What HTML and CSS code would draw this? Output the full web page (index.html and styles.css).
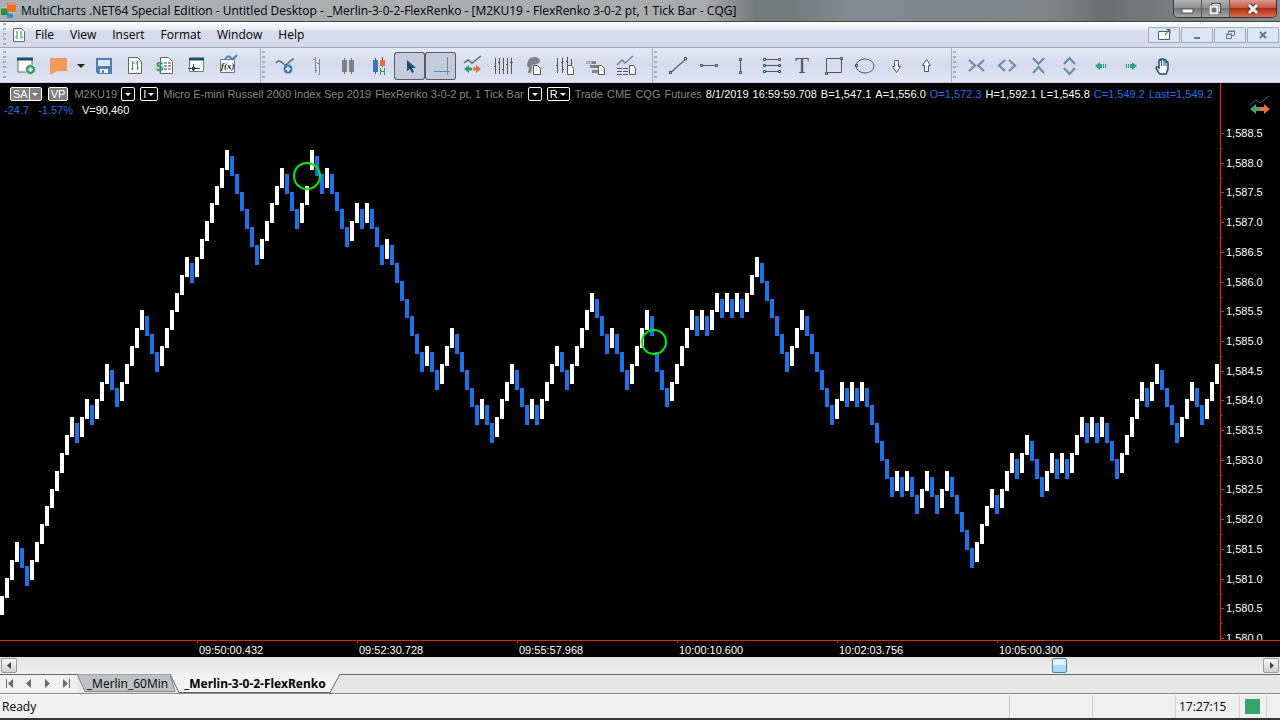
FILE: index.html
```html
<!DOCTYPE html>
<html lang="en">
<head>
    <meta charset="UTF-8">
    <meta name="viewport" content="width=device-width, initial-scale=1.0">
    <title>MultiCharts .NET64 Special Edition</title>
    <link rel="stylesheet" href="styles.css">
</head>
<body>
    <header class="titlebar">
        <svg class="app-icon" width="17" height="17" viewBox="0 0 17 17">
            <rect x="0" y="6" width="7" height="7" fill="#2f8a3c"/>
            <rect x="6" y="1" width="9" height="9" fill="#e8702a"/>
            <rect x="6" y="11" width="6" height="5" fill="#2d8fd0"/>
            <path d="M0 6h6M7 2h8M8 11h5" stroke="#fff" stroke-opacity=".5"/>
        </svg>
        <h1 class="title">MultiCharts .NET64 Special Edition - Untitled Desktop - _Merlin-3-0-2-FlexRenko - [M2KU19 - FlexRenko 3-0-2 pt, 1 Tick Bar - CQG]</h1>
        <div class="window-buttons">
            <button class="win-btn" aria-label="Minimize"><svg width="27" height="16" viewBox="0 0 27 16"><rect x="8" y="8" width="11" height="4" fill="#fff" stroke="#555"/></svg></button>
            <button class="win-btn" aria-label="Restore"><svg width="27" height="16" viewBox="0 0 27 16"><path d="M10.500 3.500h7v7h-7z" fill="none" stroke="#444" stroke-width="3"/><path d="M10.500 3.500h7v7h-7z" fill="none" stroke="#fff"/><rect x="8.500" y="5.500" width="7" height="7" fill="#666" stroke="#444" stroke-width="3"/><rect x="8.500" y="5.500" width="7" height="7" fill="#777" stroke="#fff" stroke-width="2"/></svg></button>
            <button class="win-btn win-close" aria-label="Close"><svg width="46" height="16" viewBox="0 0 46 16"><path d="M19 4l8 8M27 4l-8 8" stroke="#5a3030" stroke-width="5"/><path d="M19 4l8 8M27 4l-8 8" stroke="#fff" stroke-width="3"/></svg></button>
        </div>
    </header>

    <nav class="menubar">
        <span class="grip"></span>
        <svg class="doc-icon" width="14" height="16" viewBox="0 0 14 16">
            <path d="M1.500 1.500h8l3 3v10h-11z" fill="#fff" stroke="#666"/>
            <path d="M5 4v8M3 10h2M5 6h1M9 4v8M8 6h1M9 10h2" stroke="#2d9c60" fill="none"/>
        </svg>
        <button class="menu-item">File</button>
        <button class="menu-item">View</button>
        <button class="menu-item">Insert</button>
        <button class="menu-item">Format</button>
        <button class="menu-item">Window</button>
        <button class="menu-item">Help</button>
        <div class="mdi-buttons">
            <button class="mdi-btn" aria-label="Detach"><svg width="30" height="14" viewBox="0 0 30 14"><path d="M9.500 3.500h11v8h-11z" fill="#fff" stroke="#555"/><path d="M16 7l4-5M17 1.500h4v4" fill="none" stroke="#555"/></svg></button>
            <button class="mdi-btn" aria-label="Minimize chart"><svg width="30" height="14" viewBox="0 0 30 14"><path d="M12 10h6" stroke="#5f7896" stroke-width="2"/></svg></button>
            <button class="mdi-btn" aria-label="Restore chart"><svg width="30" height="14" viewBox="0 0 30 14"><path d="M13.500 5V3.500h6v4H17M11.500 6.500h5v4h-5zM13 3h7M11 6h6" fill="none" stroke="#5f7896"/></svg></button>
            <button class="mdi-btn" aria-label="Close chart"><svg width="30" height="14" viewBox="0 0 30 14"><path d="M12 4l6 6M18 4l-6 6" stroke="#5f7896" stroke-width="2"/></svg></button>
        </div>
    </nav>

    <div class="toolbar">
        <div class="tool-group first">
            <span class="grip"></span>
            <button class="tool" aria-label="New window"><svg viewBox="0 0 31 28"><path d="M8 7h14v13H8z" fill="#fff" stroke="#666"/><path d="M7 7h16" stroke="#1d4e72" stroke-width="3"/><circle cx="20.500" cy="17.500" r="5" fill="#2d9c60" stroke="#dfe3f3"/><path d="M18 17.500h5M20.500 15v5" stroke="#fff" stroke-width="1.500"/></svg></button>
            <button class="tool wide" aria-label="Open workspace"><svg viewBox="0 0 47 28"><path d="M9 6h17v13H16l-5 3H9z" fill="#f29a57"/><path d="M36 12h8l-4 4z" fill="#222"/></svg></button>
            <button class="tool" aria-label="Save"><svg viewBox="0 0 31 28"><path d="M8 6h16v16H10l-2-2z" fill="#4b7fb5"/><path d="M10 8h12v6H10z" fill="#dfe6f2"/><path d="M12 17h8v4h-8z" fill="#fff"/><path d="M14 18h2v3h-2z" fill="#4b7fb5"/></svg></button>
            <button class="tool" aria-label="New chart"><svg viewBox="0 0 31 28"><path d="M9.500 5.500h9l4 4v12h-13z" fill="#fff" stroke="#666"/><path d="M13.500 9v9M12 17h2M14 11h2M18.500 9v9M17 11h2M18 16h2" fill="none" stroke="#2d9c60"/></svg></button>
            <button class="tool" aria-label="Trade manager"><svg viewBox="0 0 31 28"><path d="M10.500 5.500h8l4 4v12h-12z" fill="#fff" stroke="#666"/><path d="M14 11h3M18 11h3M14 14h3M18 14h3M14 17h3M18 17h3" stroke="#444"/><text x="6" y="19" class="icon-dollar">$</text></svg></button>
            <button class="tool" aria-label="Scanner"><svg viewBox="0 0 31 28"><path d="M8.500 7.500h14v12h-14z" fill="#fff" stroke="#777"/><path d="M8 7h15" stroke="#1d4e72" stroke-width="3"/><path d="M7 16.500h12M12.500 12v7" stroke="#1d4e72"/><circle cx="12.500" cy="16.500" r="2" fill="#1d4e72"/></svg></button>
            <button class="tool" aria-label="Formula"><svg viewBox="0 0 31 28"><path d="M8.500 7.500h14v13h-14z" fill="#fff" stroke="#777"/><text x="9" y="17" class="icon-fx">f(x)</text><path d="M13 8c2-5 4-4 6-2s3 0 6-3" fill="none" stroke="#3b87c8" stroke-width="2"/></svg></button>
        </div>
        <div class="tool-group">
            <span class="grip"></span>
            <button class="tool" aria-label="Insert study"><svg viewBox="0 0 31 28"><path d="M6 11c4-5 7 1 9 2s5-6 9-6" fill="none" stroke="#666" stroke-width="1.500"/><circle cx="18" cy="17" r="4.500" fill="#3d78ad"/><path d="M15.500 17h5M18 14.500v5" stroke="#fff" stroke-width="1.500"/></svg></button>
            <button class="tool" aria-label="OHLC bars"><svg viewBox="0 0 31 28"><path d="M14.500 5v16M12 7.500h2M14 18.500h2M18.500 7v16M16 11.500h2" stroke="#85878d"/></svg></button>
            <button class="tool" aria-label="Candlesticks"><svg viewBox="0 0 31 28"><path d="M10 8h5v12h-5zM17 8h5v12h-5z" fill="#808285"/><path d="M12.500 6v16M19.500 6v16" stroke="#777"/></svg></button>
            <button class="tool" aria-label="Heikin-Ashi"><svg viewBox="0 0 31 28"><path d="M12.500 6v16M19.500 5v10" stroke="#555"/><path d="M10 8h5v12h-5z" fill="#3d78ad"/><path d="M17 8h5v6h-5z" fill="#e8703a"/><path d="M17.500 16v7M21.500 16v7M18 19.500h4" stroke="#2d9c60"/></svg></button>
            <button class="tool active" aria-label="Pointer"><svg viewBox="0 0 31 28"><path d="M13 8v11l3-2 2 4 2-1-2-4h4z" fill="#1d4e72"/></svg></button>
            <button class="tool active" aria-label="Crosshair"><svg viewBox="0 0 31 28"><path d="M22.500 5v18M9 19.500h16" stroke="#4f93cd"/></svg></button>
            <button class="tool" aria-label="Chart trading"><svg viewBox="0 0 31 28"><path d="M8 11l4-3 4 3 9-7" fill="none" stroke="#666" stroke-width="1.500"/><path d="M8 17l5-4v2.500h3v3h-3V21z" fill="#2d9c60"/><path d="M25 17l-5-4v2.500h-3v3h3V21z" fill="#e8703a"/></svg></button>
            <button class="tool" aria-label="Bars"><svg viewBox="0 0 31 28"><path d="M8.500 6v16M12.500 6v16M16.500 6v16M20.500 6v16M24.500 6v16M7 14.500h2M11 10.500h2M15 17.500h2M19 12.500h2M23 10.500h3" stroke="#555"/></svg></button>
            <button class="tool" aria-label="Strategy"><svg viewBox="0 0 31 28"><path d="M9 14c0-6 3-9 7-9 4 0 6 2 6 5l-3 2-5 1v3l-1 5h-3l1-5z" fill="#808285"/><path d="M15.500 13.500h4l3 3v6h-7z" fill="#fff" stroke="#555"/></svg></button>
            <button class="tool" aria-label="Format instruments"><svg viewBox="0 0 31 28"><path d="M8.500 6v15M13.500 6v15M18.500 5v9M22.500 7v6M7 13.500h2M12 10.500h2M13 17.500h2M17 9.500h2" stroke="#555"/><path d="M18.500 13.500h4l2 3v6h-6z" fill="#fff" stroke="#555"/></svg></button>
            <button class="tool" aria-label="Format orders"><svg viewBox="0 0 31 28"><path d="M6 9h6v3H6zM12 13h5v3h-5z" fill="#b0b0b0"/><path d="M12 9h4v3h-4zM10 13h8v3h-8zM12 18h6v3h-6z" fill="#808285"/><path d="M18.500 13.500h3l3 3v6h-6z" fill="#fff" stroke="#555"/></svg></button>
            <button class="tool" aria-label="Format studies"><svg viewBox="0 0 31 28"><path d="M6 13l5-5 3 3 8-7" fill="none" stroke="#6f87a5" stroke-width="1.500"/><path d="M6 16.500h5M12 16.500h5M6 19.500h5M12 19.500h5M6 22.500h5M12 22.500h5" stroke="#555"/><path d="M18.500 13.500h4l2 3v6h-6z" fill="#fff" stroke="#555"/></svg></button>
        </div>
        <div class="tool-group">
            <span class="grip"></span>
            <button class="tool" aria-label="Trend line"><svg viewBox="0 0 31 28"><path d="M8 21L24 7" stroke="#666" stroke-width="1.500"/><path d="M7.500 19.500h2v2h-2zM22.500 5.500h2v2h-2z" class="handle"/></svg></button>
            <button class="tool" aria-label="Horizontal line"><svg viewBox="0 0 31 28"><path d="M9 13.500h14" stroke="#555"/><path d="M7.500 12.500h2v2h-2zM22.500 12.500h2v2h-2z" class="handle"/></svg></button>
            <button class="tool" aria-label="Vertical line"><svg viewBox="0 0 31 28"><path d="M16.500 7v13" stroke="#555"/><path d="M15.500 6.500h2v2h-2zM15.500 19.500h2v2h-2z" class="handle"/></svg></button>
            <button class="tool" aria-label="Fibonacci"><svg viewBox="0 0 31 28"><path d="M9 7.500h15M9 13.500h15M9 19.500h15" stroke="#555"/><path d="M8.500 6.500h2v2h-2zM8.500 12.500h2v2h-2zM8.500 18.500h2v2h-2zM23.500 6.500h2v2h-2zM23.500 12.500h2v2h-2zM23.500 18.500h2v2h-2z" class="handle"/></svg></button>
            <button class="tool" aria-label="Text"><svg viewBox="0 0 31 28"><text x="9" y="21" class="icon-text">T</text></svg></button>
            <button class="tool" aria-label="Rectangle"><svg viewBox="0 0 31 28"><path d="M9.500 6.500h15v14h-15z" fill="none" stroke="#555"/><path d="M8.500 20.500h2v2h-2zM23.500 5.500h2v2h-2z" class="handle"/></svg></button>
            <button class="tool" aria-label="Ellipse"><svg viewBox="0 0 31 28"><ellipse cx="17" cy="14" rx="9" ry="7" fill="none" stroke="#555"/><path d="M7.500 12.500h2v2h-2z" class="handle"/></svg></button>
            <button class="tool" aria-label="Arrow down"><svg viewBox="0 0 31 28"><path d="M15.500 8.500h4v6h2l-4 6-4-6h2z" fill="#fff" stroke="#555"/></svg></button>
            <button class="tool" aria-label="Arrow up"><svg viewBox="0 0 31 28"><path d="M14.500 19.500h4v-6h2l-4-6-4 6h2z" fill="#fff" stroke="#555"/></svg></button>
        </div>
        <div class="tool-group last">
            <span class="grip"></span>
            <button class="tool" aria-label="Decrease spacing"><svg viewBox="0 0 31 28"><path d="M8 8l6 5.500L8 19M23 8l-6 5.500 6 5.500" class="chev"/></svg></button>
            <button class="tool" aria-label="Increase spacing"><svg viewBox="0 0 31 28"><path d="M13 8l-6 5.500 6 5.500M17 8l6 5.500-6 5.500" class="chev"/></svg></button>
            <button class="tool" aria-label="Compress"><svg viewBox="0 0 31 28"><path d="M10 6l5.500 6L21 6M10 21l5.500-6 5.500 6" class="chev"/></svg></button>
            <button class="tool" aria-label="Expand"><svg viewBox="0 0 31 28"><path d="M10 12l5.500-6 5.500 6M10 16l5.500 6 5.500-6" class="chev"/></svg></button>
            <button class="tool" aria-label="Scroll left"><svg viewBox="0 0 31 28"><path d="M10 14l5-4v2h2v4h-2v2zM18 12h1v4h-1zM20 12h1v4h-1z" fill="#22a678"/></svg></button>
            <button class="tool" aria-label="Scroll right"><svg viewBox="0 0 31 28"><path d="M21 14l-5-4v2h-2v4h2v2zM12 12h1v4h-1zM10 12h1v4h-1z" fill="#22a678"/></svg></button>
            <button class="tool" aria-label="Hand"><svg viewBox="0 0 31 28"><path d="M12 21l-3-5c0-2 2-1 3 0V9c0-2 2-2 2 0 0-3 3-3 3 0 0-2 2-2 2 0v2c0-2 2-2 2 0v6l-2 5h-6z" fill="#fff" stroke="#1d4e72" stroke-width="1.500"/><path d="M14.500 9v5M17 9v5M19 10v4" stroke="#1d4e72"/></svg></button>
        </div>
    </div>

    <main class="chart">
        <div class="status-line">
            <div class="status-row">
                <button class="tag filled">SA<i class="split"></i><i class="caret"></i></button>
                <button class="tag filled">VP</button>
                <span>M2KU19</span>
                <button class="tag" aria-label="Symbol"><i class="caret"></i></button>
                <button class="tag">I<i class="caret"></i></button>
                <span>Micro E-mini Russell 2000 Index Sep 2019</span>
                <span>FlexRenko 3-0-2 pt, 1 Tick Bar</span>
                <button class="tag" aria-label="Resolution"><i class="caret"></i></button>
                <button class="tag">R<i class="caret"></i></button>
                <span>Trade</span>
                <span>CME</span>
                <span>CQG</span>
                <span>Futures</span>
                <span class="white">8/1/2019</span>
                <span class="white">16:59:59.708</span>
                <span class="white">B=1,547.1</span>
                <span class="white">A=1,556.0</span>
                <span class="blue">O=1,572.3</span>
                <span class="white">H=1,592.1</span>
                <span class="white">L=1,545.8</span>
                <span class="blue">C=1,549.2</span>
                <span class="blue">Last=1,549.2</span>
            </div>
            <div class="status-row second">
                <span class="blue">-24.7</span>
                <span class="blue">-1.57%</span>
                <span class="white">V=90,460</span>
            </div>
        </div>
        <svg class="plot" id="plot"></svg>
        <svg class="trade-icon" width="22" height="20" viewBox="0 0 22 20">
            <path d="M1 10l6-5 4 3 9-7" fill="none" stroke="#4d5f74"/>
            <path d="M1 14l6-5v3h4v4H7v3z" fill="#3fa469"/>
            <path d="M21 14l-6-5v3h-4v4h4v3z" fill="#e8703a"/>
        </svg>
    </main>

    <div class="scrollbar">
        <button class="scroll-btn" aria-label="Scroll left"><svg width="14" height="13" viewBox="0 0 14 13"><path d="M9 3v7L5 6.500z" fill="#444"/></svg></button>
        <div class="track"><div class="thumb"></div></div>
        <button class="scroll-btn" aria-label="Scroll right"><svg width="14" height="13" viewBox="0 0 14 13"><path d="M6 3v7l4-3.500z" fill="#444"/></svg></button>
    </div>

    <div class="tabs">
        <div class="tab-nav">
            <button aria-label="First"><svg width="19" height="18" viewBox="0 0 19 18"><path d="M6.500 4v9" stroke="#6c6c6c"/><path d="M13 4v9L8 8.500z" fill="#6c6c6c"/></svg></button>
            <button aria-label="Previous"><svg width="19" height="18" viewBox="0 0 19 18"><path d="M12 4v9L7 8.500z" fill="#6c6c6c"/></svg></button>
            <button aria-label="Next"><svg width="19" height="18" viewBox="0 0 19 18"><path d="M7 4v9l5-4.500z" fill="#6c6c6c"/></svg></button>
            <button aria-label="Last"><svg width="19" height="18" viewBox="0 0 19 18"><path d="M12.500 4v9" stroke="#6c6c6c"/><path d="M6 4v9l5-4.500z" fill="#6c6c6c"/></svg></button>
        </div>
        <button class="tab">
            <svg class="tab-shape" viewBox="0 0 101 19" preserveAspectRatio="none"><path d="M0 0L8 17.500H98L93 0z" fill="#bcc2c3" stroke="#888"/></svg>
            <span>_Merlin_60Min</span>
        </button>
        <button class="tab current">
            <svg class="tab-shape" viewBox="0 0 170 19" preserveAspectRatio="none"><path d="M0 0L9 18.500H160L170 0z" fill="#f3f3f3"/><path d="M0 0L9 18.500H160L170 0" fill="none" stroke="#666"/></svg>
            <span>_Merlin-3-0-2-FlexRenko</span>
        </button>
    </div>

    <footer class="statusbar">
        <span class="ready">Ready</span>
        <span class="cell"></span>
        <span class="cell"></span>
        <span class="cell clock">17:27:15</span>
        <span class="cell light"><i></i></span>
        <span class="cell end"></span>
    </footer>
    <script src="chart.js"></script>
</body>
</html>
```
FILE: chart.js
```js
const plot = document.querySelector("#plot")

const axisWidth = 60
const axisHeight = 17
const barStep = 5
const tickPx = 5.94   // one tick = 0.1 pt
const highY = 67      // y of the 1,588.2 high

// Runs of up and down bars. "+" is a gap of one brick before the bar
const runs = "4U 2D 9U 1D 2U 1D 3U 2D 5U 3D 6U 1D 7U 6D 5U 3D 2U +1U 2D 1U 4D 2U 1D 1U 3D 1U 7D 1U 2D 3U 5D 1U 2D 4U 3D 1U 1D 4U 2D 5U 3D 1U 3D 4U 1D +3D 5U 1D 1U 1D 2U 1D 1U 1D 1U 1D 3U 6D 3U 6D 2U 1D 1U 1D 1U 6D 1U 1D 1U 2D 2U 2D 2U 5D 4U 1D 3U 1D 2U 3D 2U 1D 1U 1D 3U 1D 1U 1D 1U 3D 5U 1D 2U 4D 3U 2D 3U"
const times = ["09:50:00.432", "09:52:30.728", "09:55:57.968", "10:00:10.600", "10:02:03.756", "10:05:00.300"]
const circles = [[307, 93, 13], [654, 259, 12]]

function add(name, attrs, text){
    const el = document.createElementNS("http://www.w3.org/2000/svg", name)
    for (const key in attrs){
        el.setAttribute(key, attrs[key])
    }
    if (text) el.textContent = text
    plot.appendChild(el)
}

function drawBars(){
    let ticks = 78
    let x = 0
    let last = "U"
    runs.split(" ").forEach(run => {
        const dir = run.slice(-1)
        const count = parseInt(run.replace("+", ""))
        const sign = dir == "U" ? -1 : 1
        if (run[0] == "+") ticks += 3 * sign
        for (let i = 0; i < count; i++){
            ticks += (dir == last ? 3 : 1) * sign
            last = dir
            const y = Math.round(highY + ticks * tickPx)
            const bottom = Math.round(highY + (ticks + 3) * tickPx) + 2
            add("rect", {x: x, y: y, width: 4, height: bottom - y, class: dir == "U" ? "bar-up" : "bar-down"})
            x += barStep
        }
    })
}

function drawAxes(w, h){
    const right = w - axisWidth
    const bottom = h - axisHeight
    add("rect", {x: right, y: 0, width: axisWidth, height: h, class: "axis-bg"})
    for (let i = 0; i <= 17; i++){
        const y = Math.round(50 + i * tickPx * 5)
        const price = (1588.5 - i * 0.5).toFixed(1)
        add("rect", {x: right, y: y, width: 4, height: 1, class: "axis"})
        add("rect", {x: right, y: y + 15, width: 2, height: 1, class: "axis"})
        add("text", {x: right + 6, y: y + 4, class: "label"}, price.replace("1", "1,"))
    }
    add("rect", {x: 0, y: bottom, width: w, height: axisHeight, class: "axis-bg"})
    add("rect", {x: right, y: 0, width: 1, height: bottom, class: "axis"})
    add("rect", {x: 0, y: bottom, width: w, height: 1, class: "axis"})
    times.forEach((time, i) => {
        const x = 197 + i * 160
        add("rect", {x: x, y: bottom, width: 1, height: 3, class: "axis"})
        add("text", {x: x + 2, y: bottom + 14, class: "label"}, time)
    })
}

function draw(){
    plot.innerHTML = ""
    drawBars()
    circles.forEach(c => add("circle", {cx: c[0], cy: c[1], r: c[2], class: "mark"}))
    drawAxes(plot.clientWidth, plot.clientHeight)
}

draw()
window.addEventListener("resize", draw)
```
FILE: styles.css
```css
*{
    box-sizing: border-box;
}
body{
    margin: 0;
    height: 100vh;
    display: flex;
    flex-direction: column;
    overflow: hidden;
    background-color: #f0f0f0;
    color: #000;
    font-family: "Open Sans", "Noto Sans", sans-serif;
    font-size: 12px;
    border-bottom: 2px solid #333;
}
button{
    margin: 0;
    padding: 0;
    border: none;
    background: none;
    color: inherit;
    font: inherit;
}
svg{
    display: block;
}

/* title bar */
.titlebar{
    flex: none;
    display: flex;
    height: 22px;
    padding: 0 3px 0 1px;
    background: linear-gradient(90deg, #a9b0b4 0%, #a9acae 55%, #74797c 59%, #74797c 62%, #828a90 66%, #808487 82%, #6d7072 86%, #8b8e90 100%);
    border-bottom: 1px solid #444;
}
.app-icon{
    margin: 2px 3px 0 0;
}
.title{
    flex: 1;
    margin: 0;
    font-size: 12px;
    font-weight: normal;
    line-height: 21px;
    white-space: nowrap;
    overflow: hidden;
}
.window-buttons{
    display: flex;
    height: 18px;
    border: 1px solid #333;
    border-top: none;
    border-radius: 0 0 5px 5px;
    overflow: hidden;
}
.win-btn{
    background: linear-gradient(#b4b4b4, #8c8c8c 50%, #767676 50%, #a5a5a5);
    border-right: 1px solid #555;
}
.win-close{
    background: linear-gradient(#d89a90, #c4503c 50%, #b02a10 50%, #d97050);
    border-right: none;
}

/* menu */
.menubar{
    flex: none;
    display: flex;
    align-items: center;
    height: 26px;
    background: linear-gradient(#fff, #e3e7f4 35%, #d6daec 38%);
    border-bottom: 1px solid #a5a8b0;
}
.grip{
    flex: none;
    width: 3px;
    height: 24px;
    margin: 0 6px 0 3px;
    background: repeating-linear-gradient(#a9adba 0 2px, transparent 2px 5px);
}
.doc-icon{
    margin-right: 1px;
}
.menu-item{
    padding: 0 8px;
    line-height: 20px;
}
.mdi-buttons{
    display: flex;
    gap: 1px;
    margin-left: auto;
    padding-right: 1px;
}
.mdi-btn{
    border: 1px solid #9fb0c2;
    background-color: #dbe7f3;
}

/* toolbar */
.toolbar{
    flex: none;
    display: flex;
    height: 35px;
    background: linear-gradient(#e4e7f5, #d5daed 50%, #e0e4f5);
    border-bottom: 1px solid #c5c9dc;
}
.tool-group{
    display: flex;
    align-items: center;
    padding: 2px 10px 0 0;
    border-right: 1px solid #a9adba;
}
.tool-group .grip{
    height: 30px;
    margin: 0 5px 0 1px;
}
.tool-group.first{
    padding-right: 17px;
}
.tool-group.first .grip{
    margin: 0 4px 0 3px;
}
.tool-group.last{
    border-right: none;
}
.tool{
    width: 31px;
    height: 28px;
}
.tool svg{
    width: 100%;
    height: 28px;
}
.tool.wide{
    width: 47px;
}
.tool.active{
    background-color: #c6cbdc;
    border-radius: 3px;
    box-shadow: inset 0 0 0 1px #555b68;
}
.handle{
    fill: #fff;
    stroke: #1d4e72;
}
.chev{
    fill: none;
    stroke: #5f88b3;
    stroke-width: 2;
}
.icon-dollar{
    fill: #2d9c60;
    font: bold 13px "Liberation Sans", Arial, sans-serif;
}
.icon-fx{
    fill: #222;
    font: italic bold 9px "Liberation Serif", serif;
}
.icon-text{
    fill: #555;
    font: 23px "Liberation Serif", serif;
}

/* chart */
.chart{
    position: relative;
    flex: 1;
    min-height: 0;
    background-color: #000;
    font-family: "Liberation Sans", Arial, sans-serif;
    font-size: 11px;
}
.plot{
    width: 100%;
    height: 100%;
}
.status-line{
    position: absolute;
    top: 3px;
    left: 4px;
    color: #888;
}
.status-row{
    display: flex;
    align-items: center;
    gap: 4px;
    height: 16px;
    padding-left: 6px;
    white-space: nowrap;
}
.status-row.second{
    gap: 9px;
    padding-left: 0;
}
.white{
    color: #fff;
}
.blue{
    color: #1b73e8;
}
.tag{
    display: flex;
    align-items: center;
    gap: 1px;
    height: 14px;
    margin-right: 1px;
    padding: 0 2px;
    border: 1px solid #fff;
    border-radius: 2px;
    color: #fff;
}
.tag.filled{
    background-color: #808080;
    margin-right: 2px;
}
.split{
    width: 1px;
    height: 12px;
    background-color: #fff;
}
.caret{
    border: 3px solid transparent;
    border-top-color: #fff;
    border-bottom: none;
    margin: 0 1px;
}
.trade-icon{
    position: absolute;
    top: 12px;
    right: 9px;
}
.bar-up{
    fill: #fff;
}
.bar-down{
    fill: #1b73e8;
}
.mark{
    fill: none;
    stroke: #00f000;
    stroke-width: 2;
}
.axis{
    fill: #f02408;
}
.axis-bg{
    fill: #000;
}
.label{
    fill: #fff;
}

/* scrollbar */
.scrollbar{
    flex: none;
    display: flex;
    align-items: center;
    height: 17px;
    padding: 0 1px;
    background: linear-gradient(#e3e3e3, #f0f0f0);
}
.scroll-btn{
    border: 1px solid #999;
    border-radius: 2px;
    background: linear-gradient(#f8f8f8, #d0d0d0);
}
.track{
    flex: 1;
    display: flex;
    padding-left: 81%;
}
.thumb{
    width: 15px;
    height: 15px;
    border: 1px solid #3c7fb1;
    border-radius: 2px;
    background: linear-gradient(#e3f4fc 50%, #a9dbf5 50%);
}

/* workspace tabs */
.tabs{
    flex: none;
    display: flex;
    height: 20px;
    background-color: #e6e6e6;
    border-top: 1px solid #666;
    border-bottom: 1px solid #888;
}
.tab-nav{
    display: flex;
    width: 77px;
    background-color: #f0f0f0;
}
.tab{
    position: relative;
    width: 101px;
    line-height: 16px;
}
.tab.current{
    width: 170px;
    margin-left: -8px;
    font-family: "Noto Sans", "Open Sans", sans-serif;
    font-weight: bold;
}
.tab-shape{
    position: absolute;
    top: -1px;
    left: 0;
    width: 100%;
    height: 19px;
}
.tab span{
    position: relative;
}

/* status bar */
.statusbar{
    flex: none;
    display: flex;
    align-items: center;
    height: 24px;
    border-top: 1px solid #fff;
}
.ready{
    flex: 1;
    padding-left: 2px;
}
.cell{
    width: 83px;
    height: 23px;
    line-height: 24px;
    border-left: 1px solid #d0d0d0;
}
.cell.clock{
    width: 64px;
    padding-left: 3px;
}
.cell.light{
    width: 27px;
    padding: 4px 5px;
}
.cell.light i{
    display: block;
    width: 15px;
    height: 15px;
    background-color: #33a666;
}
.cell.end{
    width: 14px;
}
```
